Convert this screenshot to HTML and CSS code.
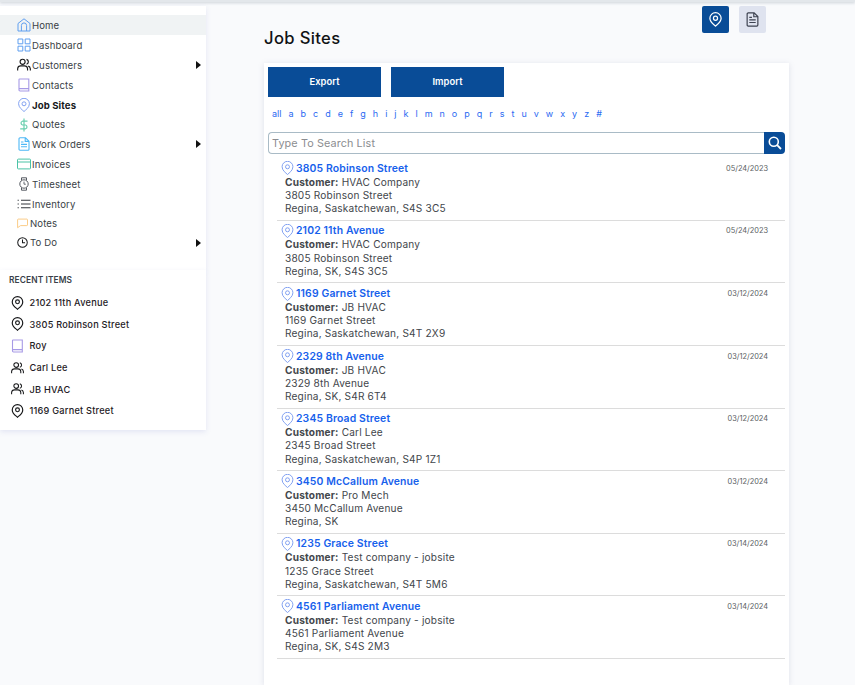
FILE: index.html
```html
<!DOCTYPE html>
<html lang="en">
<head>
<meta charset="utf-8">
<title>Job Sites</title>
<link rel="stylesheet" href="styles.css">
</head>
<body>
<svg class="defs" width="0" height="0" aria-hidden="true">
  <symbol id="i-pin" viewBox="0.5 0 15 17.6"><path d="M8 17 C6 15 1.2 12 1.2 7.2 A6.8 6.8 0 0 1 14.8 7.2 C14.8 12 10 15 8 17Z" fill="none" stroke="currentColor" stroke-width="1.2"/><circle cx="8" cy="7.3" r="2.5" fill="none" stroke="currentColor" stroke-width="1.2"/></symbol>
  <symbol id="i-pinb" viewBox="0.5 0 15 17.6"><path d="M8 16.6 C6 14.8 1.4 12 1.4 7.4 A6.6 6.6 0 0 1 14.6 7.4 C14.6 12 10 14.8 8 16.6Z" fill="none" stroke="currentColor" stroke-width="1.45"/><circle cx="8" cy="7.3" r="2.4" fill="none" stroke="currentColor" stroke-width="1.45"/></symbol>
  <symbol id="i-home" viewBox="0 0 14 14"><path d="M1 13 V5.5 L7 .8 L13 5.5 V13 Z M4.4 13 V7.5 A2.6 2.6 0 0 1 9.6 7.5 V13" fill="none" stroke="currentColor" stroke-width="1"/></symbol>
  <symbol id="i-grid" viewBox="0 0 14 14"><path d="M1 1h4.8v4.8H1zM8.2 1H13v4.8H8.2zM1 8.2h4.8V13H1zM8.2 8.2H13V13H8.2z" fill="none" stroke="currentColor" stroke-width="1"/></symbol>
  <symbol id="i-users" viewBox="0 0 15 14"><circle cx="6" cy="3.6" r="2.7" fill="none" stroke="currentColor" stroke-width="1.2"/><path d="M.7 13 V11 A3.3 3.3 0 0 1 4 8 H8 A3.3 3.3 0 0 1 11.3 11 V13 M10.2 1 A2.7 2.7 0 0 1 10.2 6.2 M12 8.2 A3.2 3.2 0 0 1 14.3 11 V13" fill="none" stroke="currentColor" stroke-width="1.2"/></symbol>
  <symbol id="i-book" viewBox="0 0 12 14"><path d="M1 12 V1.6 A.6 .6 0 0 1 1.6 1 H10.8 V13 H2 A1 1 0 0 1 1 12 A1 1 0 0 1 2 10.6 H10.8" fill="none" stroke="currentColor" stroke-width="1.1"/></symbol>
  <symbol id="i-dollar" viewBox="0 0 10 14"><path d="M5 .5V13.5M8.5 3.2H3.4A2 2 0 0 0 3.4 7H6.6A2 2 0 0 1 6.6 10.8H1.2" fill="none" stroke="currentColor" stroke-width="1.2"/></symbol>
  <symbol id="i-doc" viewBox="0 0 12 14"><path d="M1 1.8 A1 1 0 0 1 2 .8 H7.5 L11 4.2 V12.2 A1 1 0 0 1 10 13.2 H2 A1 1 0 0 1 1 12.2Z M7.2 .8 V4.4 H11 M3 5H5.5M3 7.4H9M3 9.8H9" fill="none" stroke="currentColor" stroke-width="1.1"/></symbol>
  <symbol id="i-card" viewBox="0 0 14 11"><path d="M1.3.6H12.7A.8.8 0 0 1 13.5 1.4V9.6A.8.8 0 0 1 12.7 10.4H1.3A.8.8 0 0 1 .5 9.6V1.4A.8.8 0 0 1 1.3.6ZM.5 3.5H13.5" fill="none" stroke="currentColor" stroke-width="1"/></symbol>
  <symbol id="i-watch" viewBox="0 0 10 14"><path d="M2.5 3V.8H7.5V3M2.5 11V13.2H7.5V11" fill="none" stroke="currentColor" stroke-width="1"/><circle cx="5" cy="7" r="4.2" fill="none" stroke="currentColor" stroke-width="1"/><path d="M5 4.6V7.2H6.8" fill="none" stroke="currentColor" stroke-width=".9"/></symbol>
  <symbol id="i-list" viewBox="0 0 14 10"><path d="M4 1.2H13.5M4 5H13.5M4 8.8H13.5" stroke="currentColor" stroke-width="1.1"/><path d="M.6 1.2H1.8M.6 5H1.8M.6 8.8H1.8" stroke="currentColor" stroke-width="1.1"/></symbol>
  <symbol id="i-chat" viewBox="0 0 11 10"><path d="M1.2.6H9.8A.7.7 0 0 1 10.5 1.3V6.4A.7.7 0 0 1 9.8 7.1H3.6L.6 9.2V1.3A.7.7 0 0 1 1.2.6Z" fill="none" stroke="currentColor" stroke-width=".9"/></symbol>
  <symbol id="i-clock" viewBox="0 0 12 12"><circle cx="6" cy="6" r="5.2" fill="none" stroke="currentColor" stroke-width="1.1"/><path d="M6 2.6V6.2H8.8" fill="none" stroke="currentColor" stroke-width="1.1"/></symbol>
</svg>
<div class="topbar"></div>
<div class="shell">
  <aside class="sidebar">
    <nav class="card nav">
      <a class="nav-row active"><svg class="ic c-blue i14"><use href="#i-home"/></svg>Home</a>
      <a class="nav-row"><svg class="ic c-blue i14"><use href="#i-grid"/></svg>Dashboard</a>
      <a class="nav-row"><svg class="ic c-black i14"><use href="#i-users"/></svg>Customers<i class="caret"></i></a>
      <a class="nav-row"><svg class="ic c-purple i14"><use href="#i-book"/></svg>Contacts</a>
      <a class="nav-row bold"><svg class="ic c-pin i14"><use href="#i-pin"/></svg>Job Sites</a>
      <a class="nav-row short"><svg class="ic c-green i14"><use href="#i-dollar"/></svg>Quotes</a>
      <a class="nav-row"><svg class="ic c-sky i14"><use href="#i-doc"/></svg>Work Orders<i class="caret"></i></a>
      <a class="nav-row"><svg class="ic c-teal i14"><use href="#i-card"/></svg>Invoices</a>
      <a class="nav-row"><svg class="ic c-grey i14"><use href="#i-watch"/></svg>Timesheet</a>
      <a class="nav-row"><svg class="ic c-dark i14"><use href="#i-list"/></svg>Inventory</a>
      <a class="nav-row tight"><svg class="ic c-amber i11"><use href="#i-chat"/></svg>Notes</a>
      <a class="nav-row tight"><svg class="ic c-black i11"><use href="#i-clock"/></svg>To Do<i class="caret"></i></a>
    </nav>
    <section class="card recent">
      <h2 class="recent-title">RECENT ITEMS</h2>
      <a class="recent-row"><svg class="ic c-black i13"><use href="#i-pinb"/></svg>2102 11th Avenue</a>
      <a class="recent-row"><svg class="ic c-black i13"><use href="#i-pinb"/></svg>3805 Robinson Street</a>
      <a class="recent-row"><svg class="ic c-purple i13"><use href="#i-book"/></svg>Roy</a>
      <a class="recent-row"><svg class="ic c-black i13"><use href="#i-users"/></svg>Carl Lee</a>
      <a class="recent-row"><svg class="ic c-black i13"><use href="#i-users"/></svg>JB HVAC</a>
      <a class="recent-row"><svg class="ic c-black i13"><use href="#i-pinb"/></svg>1169 Garnet Street</a>
    </section>
  </aside>
  <main class="main">
    <div class="tools">
      <button class="tool tool-on"><svg class="tool-ic"><use href="#i-pinb"/></svg></button>
      <button class="tool tool-off"><svg class="tool-ic"><use href="#i-doc"/></svg></button>
    </div>
    <h1 class="title">Job Sites</h1>
    <div class="panel">
      <div class="actions">
        <button class="action">Export</button>
        <button class="action">Import</button>
      </div>
      <div class="alpha">
        <a>all</a><a>a</a><a>b</a><a>c</a><a>d</a><a>e</a><a>f</a><a>g</a><a>h</a><a>i</a><a>j</a><a>k</a><a>l</a><a>m</a><a>n</a><a>o</a><a>p</a><a>q</a><a>r</a><a>s</a><a>t</a><a>u</a><a>v</a><a>w</a><a>x</a><a>y</a><a>z</a><a>#</a>
      </div>
      <div class="search">
        <input class="search-input" type="text" placeholder="Type To Search List">
        <button class="search-btn" aria-label="Search"><svg width="14" height="14" viewBox="0 0 14 14"><circle cx="5.8" cy="5.8" r="4.5" fill="none" stroke="#fff" stroke-width="1.6"/><path d="M9.2 9.2L13 13" stroke="#fff" stroke-width="1.8"/></svg></button>
      </div>
      <ul class="sites">
        <li class="site"><div class="site-head"><a class="site-name"><svg class="ic c-pin i13"><use href="#i-pin"/></svg>3805 Robinson Street</a><span class="site-date">05/24/2023</span></div><p class="site-line"><b>Customer:</b> HVAC Company</p><p class="site-line">3805 Robinson Street</p><p class="site-line">Regina, Saskatchewan, S4S 3C5</p></li>
        <li class="site"><div class="site-head"><a class="site-name"><svg class="ic c-pin i13"><use href="#i-pin"/></svg>2102 11th Avenue</a><span class="site-date">05/24/2023</span></div><p class="site-line"><b>Customer:</b> HVAC Company</p><p class="site-line">3805 Robinson Street</p><p class="site-line">Regina, SK, S4S 3C5</p></li>
        <li class="site"><div class="site-head"><a class="site-name"><svg class="ic c-pin i13"><use href="#i-pin"/></svg>1169 Garnet Street</a><span class="site-date">03/12/2024</span></div><p class="site-line"><b>Customer:</b> JB HVAC</p><p class="site-line">1169 Garnet Street</p><p class="site-line">Regina, Saskatchewan, S4T 2X9</p></li>
        <li class="site"><div class="site-head"><a class="site-name"><svg class="ic c-pin i13"><use href="#i-pin"/></svg>2329 8th Avenue</a><span class="site-date">03/12/2024</span></div><p class="site-line"><b>Customer:</b> JB HVAC</p><p class="site-line">2329 8th Avenue</p><p class="site-line">Regina, SK, S4R 6T4</p></li>
        <li class="site"><div class="site-head"><a class="site-name"><svg class="ic c-pin i13"><use href="#i-pin"/></svg>2345 Broad Street</a><span class="site-date">03/12/2024</span></div><p class="site-line"><b>Customer:</b> Carl Lee</p><p class="site-line">2345 Broad Street</p><p class="site-line">Regina, Saskatchewan, S4P 1Z1</p></li>
        <li class="site"><div class="site-head"><a class="site-name"><svg class="ic c-pin i13"><use href="#i-pin"/></svg>3450 McCallum Avenue</a><span class="site-date">03/12/2024</span></div><p class="site-line"><b>Customer:</b> Pro Mech</p><p class="site-line">3450 McCallum Avenue</p><p class="site-line">Regina, SK</p></li>
        <li class="site"><div class="site-head"><a class="site-name"><svg class="ic c-pin i13"><use href="#i-pin"/></svg>1235 Grace Street</a><span class="site-date">03/14/2024</span></div><p class="site-line"><b>Customer:</b> Test company - jobsite</p><p class="site-line">1235 Grace Street</p><p class="site-line">Regina, Saskatchewan, S4T 5M6</p></li>
        <li class="site"><div class="site-head"><a class="site-name"><svg class="ic c-pin i13"><use href="#i-pin"/></svg>4561 Parliament Avenue</a><span class="site-date">03/14/2024</span></div><p class="site-line"><b>Customer:</b> Test company - jobsite</p><p class="site-line">4561 Parliament Avenue</p><p class="site-line">Regina, SK, S4S 2M3</p></li>
      </ul>
    </div>
  </main>
</div>
</body>
</html>
```

FILE: styles.css
```css
* { box-sizing: border-box; }
html, body { height: 100%; }
body {
  margin: 0;
  height: 685px;
  overflow: hidden;
  background: #f9fafc;
  font-family: Inter, "Open Sans", sans-serif;
  color: #33383d;
  display: flex;
  flex-direction: column;
}
.defs { position: absolute; }
.topbar {
  height: 2px;
  flex: none;
  background: #e3e7eb;
  box-shadow: 0 1px 3px rgba(120, 135, 150, .4);
}
.shell {
  flex: 1;
  min-height: 0;
  display: flex;
  align-items: stretch;
}
.sidebar { width: 206px; flex: none; padding-top: 4px; }
.card { background: #fff; box-shadow: 0 2px 5px rgba(120, 125, 200, .16); }
.nav { height: 264px; padding-top: 9px; }
.nav-row {
  height: 20px;
  display: flex;
  align-items: center;
  gap: 1px;
  padding-left: 17px;
  padding-right: 5px;
  font-size: 9.6px;
  letter-spacing: .1px;
  color: #3a3f46;
}
.nav-row.active { background: #f0f3f4; }
.nav-row.bold { font-weight: 700; color: #16181b; }
.nav-row.short { height: 19px; }
.nav-row.tight { height: 19px; gap: 2px; }
.caret {
  margin-left: auto;
  width: 0;
  height: 0;
  border-left: 5px solid #111;
  border-top: 4px solid transparent;
  border-bottom: 4px solid transparent;
}
.ic { flex: none; }
.i14 { width: 14px; height: 14px; }
.i13 { width: 13px; height: 14px; }
.i11 { width: 11px; height: 11px; }
.c-blue { color: #5f9ff0; }
.c-black { color: #17181a; }
.c-purple { color: #a79ae6; }
.c-pin { color: #7d9df0; }
.c-green { color: #69cfae; }
.c-sky { color: #4db8f6; }
.c-teal { color: #4bc3a6; }
.c-grey { color: #565b62; }
.c-dark { color: #33373c; }
.c-amber { color: #fac67a; }
.recent { height: 160px; padding: 4px 0 0; }
.recent-title {
  margin: 0 0 6px;
  padding-left: 9px;
  font-size: 8.4px;
  line-height: 12px;
  font-weight: 600;
  color: #3a3f4a;
  letter-spacing: .1px;
}
.recent-row {
  height: 21.6px;
  display: flex;
  align-items: center;
  gap: 5.5px;
  padding-left: 11px;
  font-size: 9.2px;
  font-weight: 500;
  letter-spacing: .22px;
  color: #1e2024;
}
.main {
  margin-left: 58px;
  width: 525px;
  flex: none;
  display: flex;
  flex-direction: column;
  position: relative;
}
.tools {
  position: absolute;
  top: 4px;
  left: 438px;
  display: flex;
  gap: 10px;
}
.tool {
  width: 27px;
  height: 27px;
  border: 0;
  border-radius: 2px;
  padding: 0;
  display: flex;
  align-items: center;
  justify-content: center;
}
.tool-on { background: #094c97; color: #fff; }
.tool-off { background: #dfe3ef; color: #3d4250; }
.tool-ic { width: 13px; height: 15px; }
.title {
  margin: 0;
  padding-top: 24px;
  height: 61px;
  font-size: 16.6px;
  line-height: 24px;
  font-weight: 500;
  letter-spacing: .35px;
  color: #101215;
}
.panel {
  flex: 1;
  background: #fff;
  box-shadow: 0 1px 6px rgba(120, 125, 160, .2);
  padding: 4px 4px 0;
}
.actions { display: flex; gap: 10px; }
.action {
  width: 113px;
  height: 30px;
  border: 0;
  padding: 0 0 2px;
  background: #094c97;
  color: #fff;
  font-family: inherit;
  font-size: 9.4px;
  font-weight: 600;
  letter-spacing: .05px;
}
.alpha {
  display: flex;
  padding: 10px 0 0 4px;
  height: 35px;
  gap: 7px;
  font-size: 9px;
  line-height: 13px;
  color: #2b6af2;
}
.search { display: flex; height: 22px; }
.search-input {
  flex: 1;
  min-width: 0;
  border: 1px solid #a9bbc6;
  border-bottom-width: 1.5px;
  border-right: 0;
  border-radius: 4px 0 0 4px;
  padding: 0 3px;
  font-family: inherit;
  font-size: 10.8px;
  letter-spacing: .12px;
  background: #fff;
  outline: none;
}
.search-input::placeholder { color: #8b8d90; opacity: 1; }
.search-btn {
  width: 21px;
  border: 0;
  padding: 0;
  background: #094c97;
  border-radius: 0 4px 4px 0;
  display: flex;
  align-items: center;
  justify-content: center;
}
.sites { list-style: none; margin: 4.32px 0 0 9px; padding: 0; }
.site {
  height: 62.58px;
  border-bottom: 1px solid #dcdcdc;
  padding: 2.6px 0 0 8px;
  color: #42464b;
}
.site-head { display: flex; justify-content: space-between; height: 15px; margin-left: -4px; }
.site-name {
  display: flex;
  align-items: center;
  gap: 2px;
  font-size: 10.4px;
  font-weight: 600;
  letter-spacing: .15px;
  color: #1761ec;
}
.site-date { font-size: 7.4px; line-height: 15px; color: #595d62; margin-right: 17px; }
.site-line { margin: 0; font-size: 10.1px; line-height: 13.2px; letter-spacing: .19px; }
.site-line b { font-weight: 700; color: #44484c; }
```
